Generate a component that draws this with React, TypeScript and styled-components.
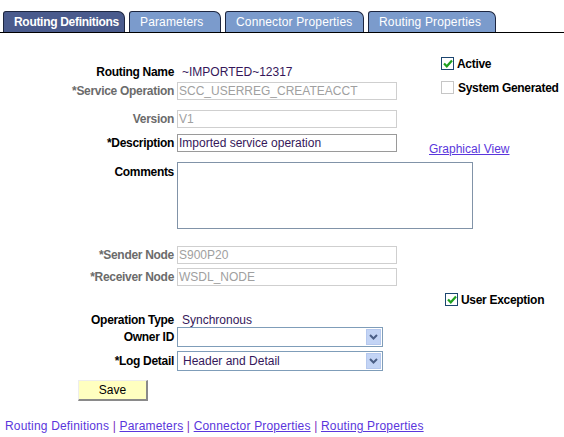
import React from "react";
import styled, { createGlobalStyle, css } from "styled-components";

const Global = createGlobalStyle`
  body {
    margin: 0;
    background: #fff;
    font-family: "Liberation Sans", Arial, sans-serif;
    font-size: 12px;
    color: #000;
  }
`;

const Page = styled.div`
  width: 564px;
  padding-top: 11px;
`;

const TabBar = styled.div`
  display: flex;
  gap: 4px;
  padding-left: 3px;
  border-bottom: 1px solid #000;
`;

const Tab = styled.div<{ $active?: boolean; $w: number }>`
  box-sizing: border-box;
  width: ${(p) => p.$w}px;
  height: 21px;
  padding: 0 0 0 10px;
  display: flex;
  align-items: center;
  color: #fff;
  border: 1px solid #1d2640;
  border-bottom: none;
  border-radius: 3px 7px 0 0;
  background: ${(p) => (p.$active ? "#4a5b8d" : "#7b9bcc")};
  font-weight: ${(p) => (p.$active ? "bold" : "normal")};
  letter-spacing: ${(p) => (p.$active ? "-0.3px" : "0.15px")};
  white-space: nowrap;
`;

const TopSection = styled.div`
  display: flex;
  margin-top: 23px;
`;

const LeftStack = styled.div`
  display: flex;
  flex-direction: column;
  width: 397px;
`;

const RightStack = styled.div`
  display: flex;
  flex-direction: column;
  margin-left: 32px;
`;

const Row = styled.div<{ $mt?: number; $h?: number; $top?: boolean }>`
  display: flex;
  align-items: ${(p) => (p.$top ? "flex-start" : "center")};
  margin-top: ${(p) => p.$mt ?? 0}px;
  ${(p) => p.$h && css`height: ${p.$h}px;`}
`;

const Label = styled.div<{ $disabled?: boolean; $pt?: number }>`
  width: 174px;
  text-align: right;
  font-weight: bold;
  letter-spacing: -0.3px;
  color: ${(p) => (p.$disabled ? "#6b6b6b" : "#000")};
  margin-right: 3px;
  white-space: nowrap;
  padding-top: ${(p) => p.$pt ?? 0}px;
  flex: none;
`;

const Value = styled.div`
  color: #35175a;
  margin-left: 5px;
  line-height: 14px;
`;

const Input = styled.div<{ $disabled?: boolean; $w?: number }>`
  box-sizing: border-box;
  width: ${(p) => p.$w ?? 220}px;
  height: 18px;
  border: 1px solid ${(p) => (p.$disabled ? "#cfcfcf" : "#9a9a9a")};
  color: ${(p) => (p.$disabled ? "#a0a0a0" : "#35175a")};
  padding-left: 1px;
  display: flex;
  align-items: center;
  white-space: nowrap;
  overflow: hidden;
`;

const TextArea = styled.div`
  box-sizing: border-box;
  width: 296px;
  height: 67px;
  border: 1px solid #8193a8;
`;

const CheckRow = styled.div<{ $mt?: number; $pl?: number }>`
  display: flex;
  align-items: center;
  height: 15px;
  margin-top: ${(p) => p.$mt ?? 0}px;
  padding-left: ${(p) => p.$pl ?? 0}px;
  gap: 3px;
`;

const Box = styled.div<{ $checked?: boolean }>`
  box-sizing: border-box;
  width: 13px;
  height: 13px;
  border: 1px solid ${(p) => (p.$checked ? "#1c4670" : "#c6c6c6")};
  background: #fff;
  display: flex;
  align-items: center;
  justify-content: center;
  flex: none;
`;

const CheckLabel = styled.span<{ $pl?: number }>`
  font-weight: bold;
  letter-spacing: -0.3px;
  white-space: nowrap;
  padding-left: ${(p) => p.$pl ?? 0}px;
`;

const Link = styled.a<{ $plain?: boolean }>`
  color: #5a36dc;
  text-decoration: ${(p) => (p.$plain ? "none" : "underline")};
  cursor: pointer;
  white-space: nowrap;
`;

const GraphLink = styled.div`
  margin-top: 47px;
  line-height: 14px;
`;

const Select = styled.div`
  box-sizing: border-box;
  width: 206px;
  height: 20px;
  border: 1px solid #7f9db9;
  display: flex;
  align-items: center;
  justify-content: space-between;
  padding: 1px;
  color: #35175a;
`;

const SelectText = styled.span`
  padding-left: 4px;
`;

const Arrow = styled.div`
  width: 15px;
  height: 16px;
  background: #c3d4f5;
  border: 1px solid #b5c8ee;
  box-sizing: border-box;
  display: flex;
  align-items: center;
  justify-content: center;
`;

const SaveButton = styled.div`
  box-sizing: border-box;
  margin: 9px 0 0 78px;
  width: 70px;
  height: 21px;
  background: #ffffc0;
  border-top: 1px solid #ededed;
  border-left: 1px solid #ededed;
  border-right: 2px solid #8a8a8a;
  border-bottom: 2px solid #8a8a8a;
  display: flex;
  align-items: center;
  justify-content: center;
  color: #000;
`;

const Footer = styled.div`
  margin-top: 18px;
  padding-left: 5px;
  line-height: 14px;
  white-space: nowrap;
  letter-spacing: 0.18px;
`;

const Sep = styled.span`
  color: #7c2cc0;
`;

const Check = () => (
  <svg width="10" height="9" viewBox="0 0 10 9">
    <path d="M1 4.5 L3.8 7.3 L9 1.5" stroke="#1fa01f" strokeWidth="2.2" fill="none" />
  </svg>
);

const Chevron = () => (
  <svg width="9" height="6" viewBox="0 0 9 6">
    <path d="M1 1 L4.5 4.5 L8 1" stroke="#4b5f86" strokeWidth="2" fill="none" />
  </svg>
);

export default function App() {
  return (
    <Page>
      <Global />
      <TabBar>
        <Tab $active $w={122}>Routing Definitions</Tab>
        <Tab $w={92}>Parameters</Tab>
        <Tab $w={139}>Connector Properties</Tab>
        <Tab $w={128}>Routing Properties</Tab>
      </TabBar>

      <TopSection>
        <LeftStack>
          <Row $mt={8} $h={16}>
            <Label>Routing Name</Label>
            <Value>~IMPORTED~12317</Value>
          </Row>
          <Row $mt={2}>
            <Label $disabled>*Service Operation</Label>
            <Input $disabled>SCC_USERREG_CREATEACCT</Input>
          </Row>
          <Row $mt={10}>
            <Label $disabled>Version</Label>
            <Input $disabled>V1</Input>
          </Row>
          <Row $mt={6}>
            <Label>*Description</Label>
            <Input>Imported service operation</Input>
          </Row>
        </LeftStack>
        <RightStack>
          <CheckRow $pl={12}>
            <Box $checked>
              <Check />
            </Box>
            <CheckLabel>Active</CheckLabel>
          </CheckRow>
          <CheckRow $pl={12} $mt={9}>
            <Box />
            <CheckLabel $pl={1}>System Generated</CheckLabel>
          </CheckRow>
          <GraphLink>
            <Link>Graphical View</Link>
          </GraphLink>
        </RightStack>
      </TopSection>

      <Row $mt={6} $top>
        <Label $pt={3}>Comments</Label>
        <TextArea />
      </Row>
      <Row $mt={17}>
        <Label $disabled>*Sender Node</Label>
        <Input $disabled>S900P20</Input>
      </Row>
      <Row $mt={4}>
        <Label $disabled>*Receiver Node</Label>
        <Input $disabled>WSDL_NODE</Input>
      </Row>
      <CheckRow $mt={6} $pl={445}>
        <Box $checked>
          <Check />
        </Box>
        <CheckLabel>User Exception</CheckLabel>
      </CheckRow>
      <Row $mt={6} $h={14}>
        <Label>Operation Type</Label>
        <Value>Synchronous</Value>
      </Row>
      <Row>
        <Label>Owner ID</Label>
        <Select>
          <SelectText />
          <Arrow>
            <Chevron />
          </Arrow>
        </Select>
      </Row>
      <Row $mt={4}>
        <Label>*Log Detail</Label>
        <Select>
          <SelectText>Header and Detail</SelectText>
          <Arrow>
            <Chevron />
          </Arrow>
        </Select>
      </Row>
      <SaveButton>Save</SaveButton>
      <Footer>
        <Link $plain>Routing Definitions</Link>
        <Sep> | </Sep>
        <Link>Parameters</Link>
        <Sep> | </Sep>
        <Link>Connector Properties</Link>
        <Sep> | </Sep>
        <Link>Routing Properties</Link>
      </Footer>
    </Page>
  );
}
